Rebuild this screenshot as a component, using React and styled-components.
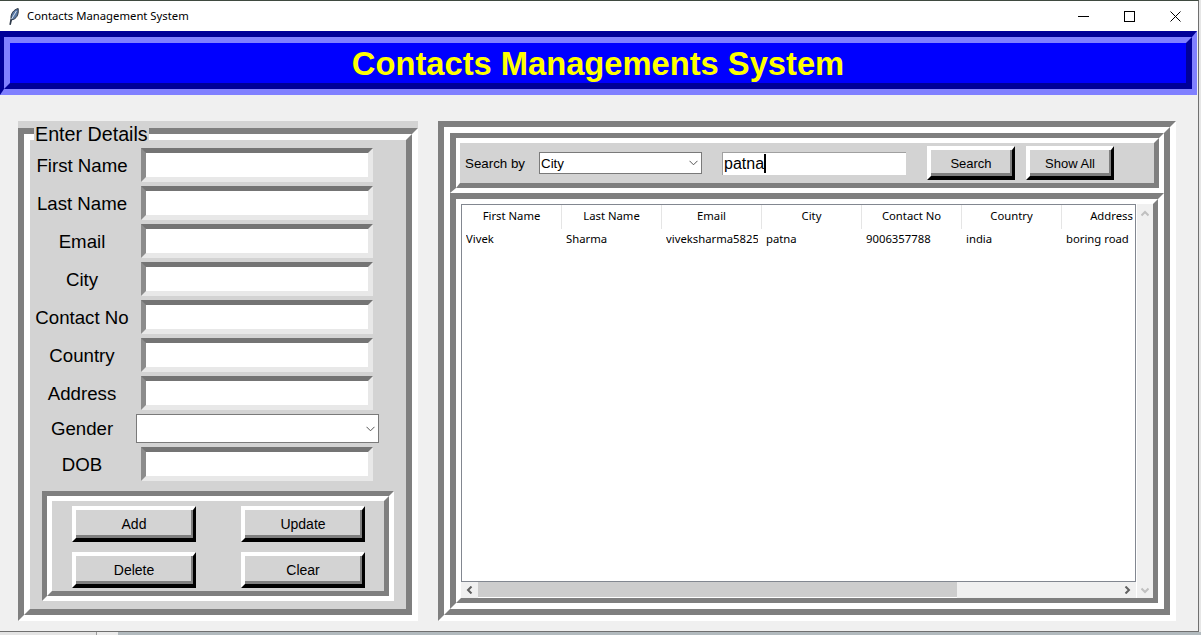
import React from 'react';
import styled, { createGlobalStyle, css } from 'styled-components';

const GlobalStyle = createGlobalStyle`
  * { box-sizing: border-box; }
  html, body { margin: 0; padding: 0; }
  body { font-family: "Liberation Sans", Arial, sans-serif; color: #000; overflow: hidden; }
`;

const ARIAL = '"Liberation Sans", Arial, sans-serif';
const UI_FONT = '"Noto Sans", "Open Sans", sans-serif';
const GREY = '#d3d3d3';
const SHADOW = '#7f7f7f';

// tk style relief: one colour on top/left, the other on bottom/right
const bevel = (tl, br) => css`
  border-style: solid;
  border-color: ${tl} ${br} ${br} ${tl};
`;

const Desktop = styled.div`
  width: 1201px;
  height: 635px;
  display: flex;
  flex-direction: column;
  overflow: hidden;
  background: #e6e6e6;
`;

const Win = styled.div`
  width: 1199px;
  height: 632px;
  flex: none;
  background: #f0f0f0;
  border-top: 1px solid #3f4a40;
  border-right: 1px solid #707070;
  border-bottom: 1px solid #707070;
  overflow: hidden;
`;

const TaskStrip = styled.div`
  flex: 1;
  display: flex;
`;

const StripCell = styled.div`
  width: ${p => (p.$w ? `${p.$w}px` : 'auto')};
  flex: ${p => (p.$w ? 'none' : 1)};
  background: ${p => p.$bg};
  border-right: ${p => (p.$sep ? '1px solid #9a9a9a' : 'none')};
`;

const TitleBar = styled.div`
  height: 30px;
  background: #fff;
  display: flex;
  align-items: center;
  padding-left: 9px;
`;

const TitleText = styled.div`
  font-family: ${UI_FONT};
  font-size: 11.3px;
  margin: 0 0 2px 8px;
  flex: 1;
`;

const WinButton = styled.div`
  width: 46px;
  height: 30px;
  display: flex;
  align-items: center;
  justify-content: center;
`;

const HeaderOuter = styled.div`
  ${bevel('#000099', '#8080ff')}
  border-width: 6px 5px 6px 4px;
  height: 64px;
  margin-right: 1px;
`;

const HeaderInner = styled.div`
  ${bevel('#8080ff', '#000099')}
  border-width: 6px;
  height: 100%;
  background: #0000ff;
  display: flex;
  align-items: center;
  justify-content: center;
  padding-top: 2px;
`;

const HeaderTitle = styled.h1`
  margin: 0;
  font-family: ${ARIAL};
  font-size: 32.7px;
  font-weight: 700;
  color: #ffff00;
`;

const Main = styled.div`
  display: flex;
  gap: 20px;
  padding: 26px 0 0 18px;
`;

const DetailsFrame = styled.section`
  position: relative;
  width: 400px;
  height: 500px;
  padding-top: 7px;
  background: ${GREY};
`;

const Legend = styled.div`
  position: absolute;
  left: 16px;
  top: 0;
  height: 19px;
  padding: 0 1px;
  background: ${GREY};
  font-size: 19.7px;
  line-height: 26px;
`;

const DetailsGrooveOuter = styled.div`
  ${bevel(SHADOW, '#fff')}
  border-width: 6px;
  height: 100%;
`;

const DetailsGrooveInner = styled.div`
  ${bevel('#fff', SHADOW)}
  border-width: 6px;
  height: 100%;
  background: ${GREY};
  padding: 8px 12px 8px 5px;
  display: flex;
  flex-direction: column;
  gap: 4px;
`;

const FormRow = styled.div`
  display: flex;
  align-items: center;
`;

const FieldLabel = styled.label`
  width: 94px;
  flex: none;
  padding-top: 1px;
  text-align: center;
  font-size: 18.67px;
  white-space: nowrap;
`;

const Entry = styled.input`
  ${bevel('#747474', '#e8e8e8')}
  border-left-color: #8c8c8c;
  border-width: 5px;
  width: 232px;
  height: 34px;
  margin-left: 12px;
  background: #fff;
  outline: none;
  padding: 0;
`;

const Combo = styled.div`
  width: ${p => p.$w}px;
  height: ${p => p.$h}px;
  margin-left: ${p => p.$ml || 0}px;
  flex: none;
  background: #fff;
  border: 1px solid #7a7a7a;
  display: flex;
  align-items: center;
  justify-content: space-between;
  padding: 0 3px 0 1px;
  font-size: 13.33px;
`;

const ButtonFrameOuter = styled.div`
  ${bevel(SHADOW, '#fff')}
  border-width: 5px;
  margin: 6px 0 0 7px;
  height: 110px;
`;

const ButtonFrameInner = styled.div`
  ${bevel('#fff', SHADOW)}
  border-width: 5px;
  height: 100%;
  background: ${GREY};
  padding: 5px 0 0 20px;
  display: grid;
  grid-template-columns: 124px 124px;
  grid-auto-rows: 36px;
  column-gap: 45px;
  row-gap: 10px;
`;

const RaisedButton = styled.button`
  ${bevel('#fff', '#000')}
  border-width: 4px 3px 4px 4px;
  width: ${p => p.$w}px;
  height: ${p => p.$h}px;
  padding: 0;
  background: ${GREY};
  font-family: ${ARIAL};
  font-size: ${p => p.$fs}px;
  color: #000;
`;

const ShowAllButton = styled(RaisedButton)`
  margin-left: 11px;
`;

const ButtonFace = styled.span`
  ${bevel(GREY, SHADOW)}
  border-width: 0 2px 3px 0;
  padding: 3px 0 0 1px;
  display: flex;
  align-items: center;
  justify-content: center;
  width: 100%;
  height: 100%;
`;

const ResultsOuter = styled.section`
  ${bevel(SHADOW, '#fff')}
  border-width: 6px;
  width: 738px;
  height: 500px;
`;

const ResultsInner = styled.div`
  ${bevel('#fff', SHADOW)}
  border-width: 6px;
  height: 100%;
`;

const SearchOuter = styled.div`
  ${bevel(SHADOW, '#fff')}
  border-width: 5px 5px 5px 6px;
  height: 60px;
`;

const SearchInner = styled.div`
  ${bevel('#fff', SHADOW)}
  border-width: 5px 5px 5px 4px;
  height: 100%;
  background: ${GREY};
  display: flex;
  align-items: center;
  padding-left: 5px;
`;

const SearchLabel = styled.span`
  font-size: 13.33px;
  width: 59px;
  flex: none;
  margin-right: 15px;
  white-space: nowrap;
`;

const SearchEntry = styled.div`
  width: 184px;
  height: 23px;
  margin: 0 21px 0 20px;
  background: #fff;
  border-top: 1px solid #a0a0a0;
  border-left: 1px solid #a0a0a0;
  display: flex;
  align-items: center;
  padding-left: 1px;
  font-size: 16px;
`;

const Caret = styled.span`
  width: 2px;
  height: 19px;
  background: #000;
`;

const TableOuter = styled.div`
  ${bevel(SHADOW, '#fff')}
  border-width: 6px;
  height: 416px;
`;

const TableInner = styled.div`
  ${bevel('#fff', SHADOW)}
  border-width: 5px;
  height: 100%;
  display: grid;
  grid-template-columns: 675px 17px;
  grid-template-rows: 378px 16px;
  background: #f0f0f0;
`;

const Tree = styled.div`
  background: #fff;
  border: 1px solid #828790;
  overflow: hidden;
`;

const TreeHead = styled.div`
  display: flex;
  height: 24px;
`;

const HeadCell = styled.div`
  width: 100px;
  flex: none;
  border-right: 1px solid #e5e5e5;
  padding-bottom: 3px;
  display: flex;
  align-items: center;
  justify-content: center;
  font-family: ${UI_FONT};
  font-size: 11.3px;
  white-space: nowrap;
`;

const TreeRow = styled.div`
  display: flex;
  height: 20px;
`;

const Cell = styled.div`
  width: 92px;
  flex: none;
  margin: 0 4px;
  overflow: hidden;
  white-space: nowrap;
  line-height: 20px;
  font-family: ${UI_FONT};
  font-size: 11.3px;
`;

const HScroll = styled.div`
  display: flex;
  align-items: center;
  background: #f0f0f0;
`;

const ScrollArrow = styled.div`
  width: ${p => p.$w || 17}px;
  height: 16px;
  flex: none;
  display: flex;
  align-items: center;
  justify-content: center;
`;

const HThumb = styled.div`
  width: 479px;
  height: 16px;
  flex: none;
  background: #cdcdcd;
  border-bottom: 1px solid #fff;
`;

const HTrack = styled.div`
  flex: 1;
`;

const VScroll = styled.div`
  grid-row: 1 / 3;
  grid-column: 2;
  background: #f0f0f0;
  border-left: 1px solid #fff;
  display: flex;
  flex-direction: column;
  justify-content: space-between;
  padding: 1px 0 0;
`;

const Feather = () => (
  <svg width="10" height="17" viewBox="0 0 10 17">
    <path d="M0.8 16.5 L2 10.5 C1.6 6 4.4 1.6 9.2 0.5 C9.8 5 8.6 9.6 4.6 11.4 L2.6 11.8 L1.5 16.5 Z" fill="#5878a4" stroke="#121a26" strokeWidth="0.8" strokeLinejoin="round" />
    <path d="M2.6 11 L7.4 3" stroke="#e2eaf2" strokeWidth="0.9" fill="none" />
  </svg>
);

const Chevron = () => (
  <svg width="9" height="6" viewBox="0 0 9 6">
    <path d="M0.5 0.8 L4.5 4.8 L8.5 0.8" fill="none" stroke="#555" strokeWidth="1" />
  </svg>
);

const ArrowLeft = () => (
  <svg width="7" height="8" viewBox="0 0 7 8">
    <path d="M5.5 0.5 L2 4 L5.5 7.5" fill="none" stroke="#606060" strokeWidth="2" />
  </svg>
);

const ArrowRight = () => (
  <svg width="7" height="8" viewBox="0 0 7 8">
    <path d="M1.5 0.5 L5 4 L1.5 7.5" fill="none" stroke="#606060" strokeWidth="2" />
  </svg>
);

const ArrowUp = () => (
  <svg width="8" height="7" viewBox="0 0 8 7">
    <path d="M0.5 5.5 L4 2 L7.5 5.5" fill="none" stroke="#c0c0c0" strokeWidth="2" />
  </svg>
);

const ArrowDown = () => (
  <svg width="8" height="7" viewBox="0 0 8 7">
    <path d="M0.5 1.5 L4 5 L7.5 1.5" fill="none" stroke="#c0c0c0" strokeWidth="2" />
  </svg>
);

const fieldsTop = ['First Name', 'Last Name', 'Email', 'City', 'Contact No', 'Country', 'Address'];
const columns = ['First Name', 'Last Name', 'Email', 'City', 'Contact No', 'Country', 'Address'];
const row = ['Vivek', 'Sharma', 'viveksharma5825@gmail.com', 'patna', '9006357788', 'india', 'boring road'];

export default function App() {
  return (
    <Desktop>
      <GlobalStyle />
      <Win>
        <TitleBar>
          <Feather />
          <TitleText>Contacts Management System</TitleText>
          <WinButton>
            <svg width="11" height="1"><rect width="11" height="1" fill="#000" /></svg>
          </WinButton>
          <WinButton>
            <svg width="11" height="11"><rect x="0.5" y="0.5" width="10" height="10" fill="none" stroke="#000" /></svg>
          </WinButton>
          <WinButton>
            <svg width="11" height="11"><path d="M0.5 0.5 L10.5 10.5 M10.5 0.5 L0.5 10.5" stroke="#000" fill="none" /></svg>
          </WinButton>
        </TitleBar>

        <HeaderOuter>
          <HeaderInner>
            <HeaderTitle>Contacts Managements System</HeaderTitle>
          </HeaderInner>
        </HeaderOuter>

        <Main>
          <DetailsFrame>
            <Legend>Enter Details</Legend>
            <DetailsGrooveOuter>
              <DetailsGrooveInner>
                {fieldsTop.map(name => (
                  <FormRow key={name}>
                    <FieldLabel>{name}</FieldLabel>
                    <Entry />
                  </FormRow>
                ))}
                <FormRow>
                  <FieldLabel>Gender</FieldLabel>
                  <Combo $w={243} $h={29} $ml={7}>
                    <span />
                    <Chevron />
                  </Combo>
                </FormRow>
                <FormRow>
                  <FieldLabel>DOB</FieldLabel>
                  <Entry />
                </FormRow>
                <ButtonFrameOuter>
                  <ButtonFrameInner>
                    {['Add', 'Update', 'Delete', 'Clear'].map(label => (
                      <RaisedButton key={label} $w={124} $h={36} $fs={14}>
                        <ButtonFace>{label}</ButtonFace>
                      </RaisedButton>
                    ))}
                  </ButtonFrameInner>
                </ButtonFrameOuter>
              </DetailsGrooveInner>
            </DetailsGrooveOuter>
          </DetailsFrame>

          <ResultsOuter>
            <ResultsInner>
              <SearchOuter>
                <SearchInner>
                  <SearchLabel>Search by</SearchLabel>
                  <Combo $w={163} $h={22}>
                    <span>City</span>
                    <Chevron />
                  </Combo>
                  <SearchEntry>
                    patna
                    <Caret />
                  </SearchEntry>
                  <RaisedButton $w={88} $h={34} $fs={13}>
                    <ButtonFace>Search</ButtonFace>
                  </RaisedButton>
                  <ShowAllButton $w={88} $h={34} $fs={13}>
                    <ButtonFace>Show All</ButtonFace>
                  </ShowAllButton>
                </SearchInner>
              </SearchOuter>

              <TableOuter>
                <TableInner>
                  <Tree>
                    <TreeHead>
                      {columns.map(col => <HeadCell key={col}>{col}</HeadCell>)}
                    </TreeHead>
                    <TreeRow>
                      {row.map(val => <Cell key={val}>{val}</Cell>)}
                    </TreeRow>
                  </Tree>
                  <VScroll>
                    <ScrollArrow $w={16}><ArrowUp /></ScrollArrow>
                    <ScrollArrow $w={16}><ArrowDown /></ScrollArrow>
                  </VScroll>
                  <HScroll>
                    <ScrollArrow><ArrowLeft /></ScrollArrow>
                    <HThumb />
                    <HTrack />
                    <ScrollArrow><ArrowRight /></ScrollArrow>
                  </HScroll>
                </TableInner>
              </TableOuter>
            </ResultsInner>
          </ResultsOuter>
        </Main>
      </Win>
      <TaskStrip>
        <StripCell $w={97} $bg="#e4e4e4" $sep />
        <StripCell $w={21} $bg="#ececec" />
        <StripCell $bg="#b2babe" />
      </TaskStrip>
    </Desktop>
  );
}
